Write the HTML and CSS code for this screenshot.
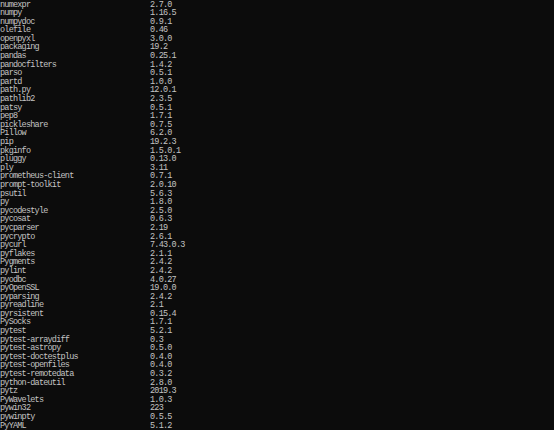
FILE: index.html
```html
<!DOCTYPE html>
<html>
<head>
<meta charset="utf-8">
<link rel="stylesheet" href="styles.css">
</head>
<body>
<div class="console">
<div class="row"><span class="name">numexpr</span><span class="ver">2.7.0</span></div>
<div class="row"><span class="name">numpy</span><span class="ver">1.16.5</span></div>
<div class="row"><span class="name">numpydoc</span><span class="ver">0.9.1</span></div>
<div class="row"><span class="name">olefile</span><span class="ver">0.46</span></div>
<div class="row"><span class="name">openpyxl</span><span class="ver">3.0.0</span></div>
<div class="row"><span class="name">packaging</span><span class="ver">19.2</span></div>
<div class="row"><span class="name">pandas</span><span class="ver">0.25.1</span></div>
<div class="row"><span class="name">pandocfilters</span><span class="ver">1.4.2</span></div>
<div class="row"><span class="name">parso</span><span class="ver">0.5.1</span></div>
<div class="row"><span class="name">partd</span><span class="ver">1.0.0</span></div>
<div class="row"><span class="name">path.py</span><span class="ver">12.0.1</span></div>
<div class="row"><span class="name">pathlib2</span><span class="ver">2.3.5</span></div>
<div class="row"><span class="name">patsy</span><span class="ver">0.5.1</span></div>
<div class="row"><span class="name">pep8</span><span class="ver">1.7.1</span></div>
<div class="row"><span class="name">pickleshare</span><span class="ver">0.7.5</span></div>
<div class="row"><span class="name">Pillow</span><span class="ver">6.2.0</span></div>
<div class="row"><span class="name">pip</span><span class="ver">19.2.3</span></div>
<div class="row"><span class="name">pkginfo</span><span class="ver">1.5.0.1</span></div>
<div class="row"><span class="name">pluggy</span><span class="ver">0.13.0</span></div>
<div class="row"><span class="name">ply</span><span class="ver">3.11</span></div>
<div class="row"><span class="name">prometheus-client</span><span class="ver">0.7.1</span></div>
<div class="row"><span class="name">prompt-toolkit</span><span class="ver">2.0.10</span></div>
<div class="row"><span class="name">psutil</span><span class="ver">5.6.3</span></div>
<div class="row"><span class="name">py</span><span class="ver">1.8.0</span></div>
<div class="row"><span class="name">pycodestyle</span><span class="ver">2.5.0</span></div>
<div class="row"><span class="name">pycosat</span><span class="ver">0.6.3</span></div>
<div class="row"><span class="name">pycparser</span><span class="ver">2.19</span></div>
<div class="row"><span class="name">pycrypto</span><span class="ver">2.6.1</span></div>
<div class="row"><span class="name">pycurl</span><span class="ver">7.43.0.3</span></div>
<div class="row"><span class="name">pyflakes</span><span class="ver">2.1.1</span></div>
<div class="row"><span class="name">Pygments</span><span class="ver">2.4.2</span></div>
<div class="row"><span class="name">pylint</span><span class="ver">2.4.2</span></div>
<div class="row"><span class="name">pyodbc</span><span class="ver">4.0.27</span></div>
<div class="row"><span class="name">pyOpenSSL</span><span class="ver">19.0.0</span></div>
<div class="row"><span class="name">pyparsing</span><span class="ver">2.4.2</span></div>
<div class="row"><span class="name">pyreadline</span><span class="ver">2.1</span></div>
<div class="row"><span class="name">pyrsistent</span><span class="ver">0.15.4</span></div>
<div class="row"><span class="name">PySocks</span><span class="ver">1.7.1</span></div>
<div class="row"><span class="name">pytest</span><span class="ver">5.2.1</span></div>
<div class="row"><span class="name">pytest-arraydiff</span><span class="ver">0.3</span></div>
<div class="row"><span class="name">pytest-astropy</span><span class="ver">0.5.0</span></div>
<div class="row"><span class="name">pytest-doctestplus</span><span class="ver">0.4.0</span></div>
<div class="row"><span class="name">pytest-openfiles</span><span class="ver">0.4.0</span></div>
<div class="row"><span class="name">pytest-remotedata</span><span class="ver">0.3.2</span></div>
<div class="row"><span class="name">python-dateutil</span><span class="ver">2.8.0</span></div>
<div class="row"><span class="name">pytz</span><span class="ver">2019.3</span></div>
<div class="row"><span class="name">PyWavelets</span><span class="ver">1.0.3</span></div>
<div class="row"><span class="name">pywin32</span><span class="ver">223</span></div>
<div class="row"><span class="name">pywinpty</span><span class="ver">0.5.5</span></div>
<div class="row"><span class="name">PyYAML</span><span class="ver">5.1.2</span></div>
</div>
</body>
</html>
```

FILE: styles.css
```css
html, body {
  margin: 0;
  padding: 0;
  background: #0c0c0c;
  height: 100%;
  overflow: hidden;
}
.console {
  padding: 0.5px 0 0 0;
  font-family: "Liberation Mono", "DejaVu Sans Mono", monospace;
  font-size: 8.5px;
  letter-spacing: -0.78px;
  line-height: 8.6px;
  color: #c4c4c4;
}
.row {
  display: grid;
  grid-template-columns: 150px auto;
  height: 8.6px;
  white-space: pre;
}
```
